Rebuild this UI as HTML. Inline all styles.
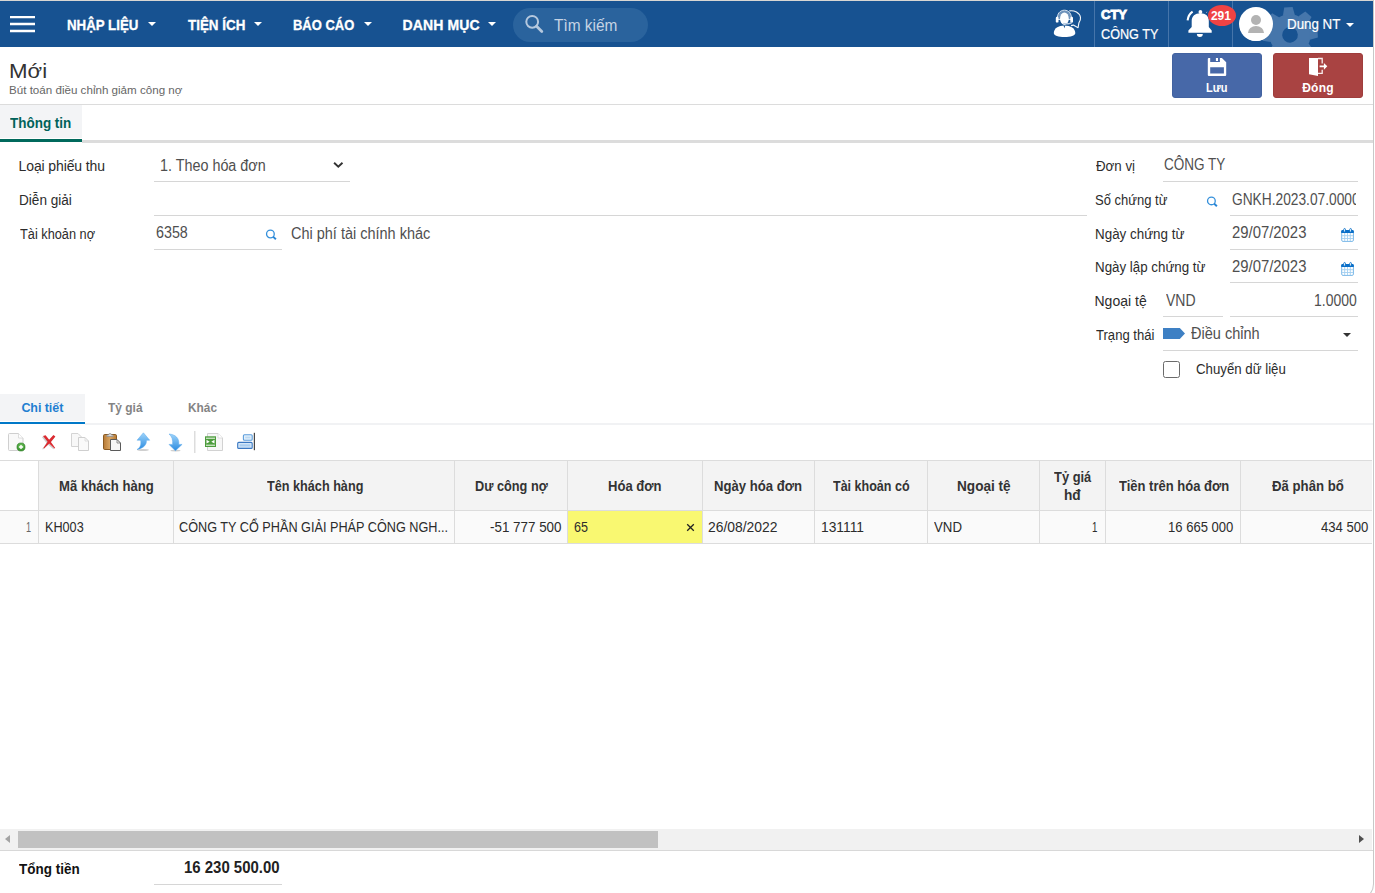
<!DOCTYPE html>
<html lang="vi">
<head>
<meta charset="utf-8">
<title>Bút toán điều chỉnh giảm công nợ</title>
<style>
*{box-sizing:border-box;margin:0;padding:0}
html,body{width:1375px;height:893px;overflow:hidden;background:#fff}
body{font-family:"Liberation Sans",sans-serif;font-size:14px;color:#333;position:relative}
.a{position:absolute}
.t{position:absolute;white-space:nowrap;line-height:20px;height:20px}
.car{position:absolute;width:0;height:0;border-left:4px solid transparent;border-right:4px solid transparent;border-top:4px solid #fff}
.sep{position:absolute;top:1px;width:1px;height:46px;background:#4675aa}
.ul{position:absolute;height:1px;background:#d6d6d6}
.vl{position:absolute;width:1px;background:#dcdcdc}
</style>
</head>
<body>
<!-- NAVBAR -->
<div class="a" style="left:0;top:1px;width:1373px;height:46px;background:#175291;overflow:hidden">
  <!-- gear watermark -->
  <svg class="a" style="left:1250px;top:0" width="80" height="46" viewBox="1250 1 80 46"><g fill="#4676ab" transform="translate(1290 34.900) rotate(-3.300)"><circle r="20.600"/><path d="M-4.200 -27.700 L4.200 -27.700 L6 -19.500 L-6 -19.500z" transform="rotate(0)"/><path d="M-4.200 -27.700 L4.200 -27.700 L6 -19.500 L-6 -19.500z" transform="rotate(45)"/><path d="M-4.200 -27.700 L4.200 -27.700 L6 -19.500 L-6 -19.500z" transform="rotate(90)"/><path d="M-4.200 -27.700 L4.200 -27.700 L6 -19.500 L-6 -19.500z" transform="rotate(135)"/><path d="M-4.200 -27.700 L4.200 -27.700 L6 -19.500 L-6 -19.500z" transform="rotate(180)"/><path d="M-4.200 -27.700 L4.200 -27.700 L6 -19.500 L-6 -19.500z" transform="rotate(225)"/><path d="M-4.200 -27.700 L4.200 -27.700 L6 -19.500 L-6 -19.500z" transform="rotate(270)"/><path d="M-4.200 -27.700 L4.200 -27.700 L6 -19.500 L-6 -19.500z" transform="rotate(315)"/><circle r="7.850" fill="#175291"/></g></svg>
</div>
<svg class="a" style="left:8px;top:12px" width="30" height="24" viewBox="8 12 30 24"><path d="M10 17.100 h25 M10 24.050 h25 M10 31 h25" stroke="#fff" stroke-width="2.400"/></svg>
<div class="car" style="left:148px;top:22px"></div>
<div class="car" style="left:254px;top:22px"></div>
<div class="car" style="left:364px;top:22px"></div>
<div class="car" style="left:488px;top:22px"></div>
<div class="a" style="left:513px;top:8px;width:135px;height:34px;border-radius:17px;background:#2a639d"></div>
<svg class="a" style="left:523px;top:13px" width="22" height="22" viewBox="0 0 22 22"><circle cx="9.2" cy="8.8" r="5.9" fill="none" stroke="#b5c8de" stroke-width="2"/><path d="M13.6 13.2 L18.8 18.4" stroke="#b5c8de" stroke-width="2.8" stroke-linecap="round"/></svg>
<div class="sep" style="left:1094px"></div>
<div class="sep" style="left:1168px"></div>
<div class="sep" style="left:1232px"></div>
<!-- support icon -->
<svg class="a" style="left:1046px;top:4px" width="48" height="40" viewBox="1046 4 48 40">
<path d="M1069.300 10.900 c5 -0.800 10.400 1.800 11.200 6.600 c0.300 2.400 -0.600 4 -1.600 5.400 l-0.800 4.800 l-4.800 -2.600 l-2.300 0.500" fill="none" stroke="#fff" stroke-width="1.100" stroke-linejoin="round" opacity="0.950"/>
<path d="M1057.400 19.500 c-0.500 -5.600 2.400 -9.300 7 -9.300 s7.500 3.700 7 9.300z" fill="#fff" fill-opacity="0.380" stroke="#d5e1ef" stroke-width="1"/>
<ellipse cx="1064.400" cy="18.700" rx="4.400" ry="6.200" fill="#fff"/>
<rect x="1055.800" y="16.800" width="2.700" height="5.800" rx="1.200" fill="#fff"/>
<rect x="1070.300" y="16.800" width="2.700" height="5.800" rx="1.200" fill="#fff"/>
<path d="M1071.500 22.400 c-0.600 1.600 -3.200 1.400 -7.600 1.200" fill="none" stroke="#b9cce2" stroke-width="1.500" stroke-linecap="round"/>
<path d="M1053.800 33 c0 -4.800 4.600 -7.600 10.700 -7.600 s10.800 2.800 10.800 7.600 c0 2.600 -4.800 4 -10.800 4 s-10.700 -1.400 -10.700 -4z" fill="#fff"/>
<path d="M1063.500 25.400 l0.900 2.800 l0.900 -2.800z" fill="#175291"/>
</svg>
<!-- bell -->
<svg class="a" style="left:1180px;top:4px" width="40" height="40" viewBox="1180 4 40 40">
<circle cx="1200.400" cy="12" r="1.900" fill="#fff"/>
<path d="M1191.700 27 V21 C1191.700 16 1195 13.200 1200.400 13.200 S1208.800 16 1208.800 21 V27 L1211.700 30.600 V32.700 H1188.400 V30.600z" fill="#fff"/>
<path d="M1196.900 34 h5.900 a2.950 2.900 0 0 1 -5.900 0z" fill="#fff"/>
<path d="M1187.600 20.300 c0.500 -3.800 2.200 -6.800 5 -8.700" fill="none" stroke="#fff" stroke-width="2.100"/>
<path d="M1206.200 12.600 l1 -0.600" fill="none" stroke="#9fb9d6" stroke-width="1"/>
</svg>
<div class="a" style="left:1208px;top:5px;width:28px;height:21px;border-radius:50%;background:#f04343"></div>
<!-- avatar -->
<div class="a" style="left:1239px;top:7px;width:34px;height:34px;border-radius:17px;background:#fff;overflow:hidden">
 <div class="a" style="left:12px;top:8px;width:10px;height:10px;border-radius:5px;background:#b3b3b3"></div>
 <div class="a" style="left:9px;top:18.500px;width:16px;height:14px;border-radius:8px 8px 0 0/7px 7px 0 0;background:#b3b3b3"></div>
 <div class="a" style="left:0;top:26px;width:34px;height:8px;background:#fff"></div>
</div>
<div class="car" style="left:1346px;top:23px"></div>

<!-- top/window edges -->
<div class="a" style="left:0;top:0;width:1374px;height:1px;background:#d8d6d3"></div>
<div class="a" style="left:1373px;top:0;width:1px;height:878px;background:#c8c8c8"></div>
<div class="a" style="left:1344px;top:850px;width:30px;height:50px;border-right:1px solid #c8c8c8;border-bottom:1px solid #c8c8c8;border-bottom-right-radius:16px"></div>

<!-- buttons -->
<div class="a" style="left:1172px;top:53px;width:90px;height:45px;border-radius:3px;background:#4768a8;border:1px solid #4262a0"></div>
<div class="a" style="left:1273px;top:53px;width:90px;height:45px;border-radius:3px;background:#a94342;border:1px solid #9f3d3c"></div>
<svg class="a" style="left:1204px;top:54px" width="28" height="26" viewBox="1204 54 28 26"><path d="M1207.800 58.900 a1 1 0 0 1 1 -1 h1.400 v4 h9.700 v-4 h2 l4.300 4.300 v12.700 a1 1 0 0 1 -1 1 h-16.400 a1 1 0 0 1 -1 -1z M1210.200 67.300 v6.200 h13.700 v-6.200z M1215.900 57.900 h2.100 v3 h-2.100z" fill="#fff" fill-rule="evenodd"/></svg>
<svg class="a" style="left:1304px;top:54px" width="28" height="26" viewBox="1304 54 28 26"><path d="M1309 57.900 h9 v18 l-9 -1.600z" fill="#fff"/><path d="M1318 58.500 h4.200 v5 M1322.200 69.700 v3.600 h-4.200" fill="none" stroke="#fff" stroke-width="1.300" opacity="0.900"/><path d="M1319.600 65.400 h4.300 v-2.400 l3.400 3.350 l-3.400 3.350 v-2.400 h-4.300z" fill="#fff"/></svg>

<!-- title line & main tab -->
<div class="a" style="left:0;top:104px;width:1373px;height:1px;background:#dcdcdc"></div>
<div class="a" style="left:0;top:105px;width:82px;height:33px;background:#f3f4f6"></div>
<div class="a" style="left:82px;top:140px;width:1291px;height:3px;background:#dcdcdc"></div>
<div class="a" style="left:0;top:139px;width:82px;height:3px;background:#00695c"></div>

<!-- form underlines -->
<div class="ul" style="left:154px;top:181px;width:196px"></div>
<div class="ul" style="left:154px;top:215px;width:933px"></div>
<div class="ul" style="left:154px;top:249px;width:128px"></div>
<div class="ul" style="left:1163px;top:181px;width:195px"></div>
<div class="ul" style="left:1230px;top:215px;width:128px"></div>
<div class="ul" style="left:1230px;top:249px;width:128px"></div>
<div class="ul" style="left:1230px;top:282px;width:128px"></div>
<div class="ul" style="left:1163px;top:316px;width:60px"></div>
<div class="ul" style="left:1230px;top:316px;width:128px"></div>
<div class="ul" style="left:1163px;top:350px;width:195px"></div>
<!-- select chevron -->
<svg class="a" style="left:333px;top:161px" width="12" height="9" viewBox="0 0 12 9"><path d="M1.100 1.800 L5.300 5.800 L9.500 1.800" fill="none" stroke="#333" stroke-width="1.900"/></svg>
<!-- search icons -->
<svg class="a" style="left:265px;top:229px" width="12" height="12" viewBox="0 0 12 12"><circle cx="5.400" cy="5" r="3.850" fill="none" stroke="#3590db" stroke-width="1.300"/><path d="M8 7.600 L10.900 10.300" stroke="#2a86d6" stroke-width="1.900"/></svg>
<svg class="a" style="left:1206px;top:196px" width="12" height="12" viewBox="0 0 12 12"><circle cx="5.400" cy="4.900" r="3.850" fill="none" stroke="#3590db" stroke-width="1.300"/><path d="M8 7.500 L10.900 10.200" stroke="#2a86d6" stroke-width="1.900"/></svg>
<!-- calendar icons -->
<svg class="a" style="left:1339px;top:226px" width="18" height="18" viewBox="1339 226 18 18"><rect x="1341.700" y="230.600" width="11.700" height="10.800" rx="1.300" fill="#fff" stroke="#7ab8e8" stroke-width="1"/><path d="M1342 235.700 h11 M1342 238.500 h11 M1344.700 233 v8 M1347.500 233 v8 M1350.300 233 v8" stroke="#a3cff0" stroke-width="0.900"/><path d="M1341.200 233 v-1.700 a1.300 1.300 0 0 1 1.300 -1.300 h10 a1.300 1.300 0 0 1 1.300 1.300 v1.700z" fill="#0a6fc8"/><path d="M1343.700 232 v-2.300 a0.900 1.200 0 0 1 1.800 0 v2.300z M1349.700 232 v-2.300 a0.900 1.200 0 0 1 1.800 0 v2.300z" fill="#fff" stroke="#0a6fc8" stroke-width="0.900"/></svg>
<svg class="a" style="left:1339px;top:260px" width="18" height="18" viewBox="1339 226 18 18"><rect x="1341.700" y="230.600" width="11.700" height="10.800" rx="1.300" fill="#fff" stroke="#7ab8e8" stroke-width="1"/><path d="M1342 235.700 h11 M1342 238.500 h11 M1344.700 233 v8 M1347.500 233 v8 M1350.300 233 v8" stroke="#a3cff0" stroke-width="0.900"/><path d="M1341.200 233 v-1.700 a1.300 1.300 0 0 1 1.300 -1.300 h10 a1.300 1.300 0 0 1 1.300 1.300 v1.700z" fill="#0a6fc8"/><path d="M1343.700 232 v-2.300 a0.900 1.200 0 0 1 1.800 0 v2.300z M1349.700 232 v-2.300 a0.900 1.200 0 0 1 1.800 0 v2.300z" fill="#fff" stroke="#0a6fc8" stroke-width="0.900"/></svg>
<!-- status tag -->
<svg class="a" style="left:1163px;top:327px" width="23" height="13" viewBox="1163 327 23 13"><path d="M1163 328 h16.800 l5.200 5.400 l-5.200 5.500 h-16.800z" fill="#3e80c4"/></svg>
<div class="a" style="left:1343px;top:333px;width:0;height:0;border-left:4px solid transparent;border-right:4px solid transparent;border-top:4px solid #333"></div>
<!-- checkbox -->
<div class="a" style="left:1163px;top:361px;width:17px;height:17px;border:1px solid #6b6b6b;border-radius:2.500px;background:#fff"></div>

<!-- detail tabs -->
<div class="a" style="left:0;top:394px;width:85px;height:27px;background:#f3f4f6"></div>
<div class="a" style="left:85px;top:423px;width:1288px;height:2px;background:#f1f2f4"></div>
<div class="a" style="left:0;top:422px;width:85px;height:2px;background:#0078c8"></div>

<!--TB0--><!-- toolbar icons -->
<svg class="a" style="left:0;top:428px" width="262" height="28" viewBox="0 428 262 28">
<defs>
<linearGradient id="gb" x1="0" y1="0" x2="0" y2="1"><stop offset="0" stop-color="#9fd4fa"/><stop offset="1" stop-color="#2a8be0"/></linearGradient>
<linearGradient id="gb2" x1="0" y1="0" x2="1" y2="0"><stop offset="0" stop-color="#2f8fe3"/><stop offset="0.5" stop-color="#9ad1f9"/><stop offset="1" stop-color="#2f8fe3"/></linearGradient>
<linearGradient id="gbr" x1="0" y1="0" x2="1" y2="0"><stop offset="0" stop-color="#b77a35"/><stop offset="0.5" stop-color="#d9a665"/><stop offset="1" stop-color="#b77a35"/></linearGradient>
<radialGradient id="gg" cx="0.5" cy="0.4" r="0.6"><stop offset="0" stop-color="#7fd06a"/><stop offset="1" stop-color="#2f8a25"/></radialGradient>
</defs>
<!-- new -->
<path d="M8.500 434.500 a1 1 0 0 1 1 -1 h9 l4.500 4.500 v11.500 a1 1 0 0 1 -1 1 h-12.500 a1 1 0 0 1 -1 -1z" fill="#f9f9f9" stroke="#cfcfcf" stroke-width="1"/>
<path d="M18.500 433.500 v4.500 h4.500" fill="#fff" stroke="#d6d6d6" stroke-width="0.800"/>
<circle cx="21" cy="447" r="4.100" fill="url(#gg)" stroke="#2c7d22" stroke-width="0.500"/>
<path d="M21 444.900 v4.200 M18.900 447 h4.200" stroke="#fff" stroke-width="1.400"/>
<!-- delete -->
<path d="M42.600 436.600 l2.600 -0.600 l3.800 4.600 l4.400 -5 l2 1.600 l-4.700 5.600 l4.300 5.600 l-0.800 0.600 l-5.200 -4.600 l-5.200 4.800 l-0.800 -0.600 l4.400 -6z" fill="#b9b9b9" opacity="0.700" transform="translate(-0.800 0.300)"/>
<path d="M43 436 l2.600 -0.800 l3.600 4.600 l4.200 -4.800 l2 1.400 l-4.500 5.600 l4.300 5.900 l-0.700 0.500 l-5.300 -4.800 l-5.100 4.900 l-0.700 -0.500 l4.200 -6.200z" fill="#dc2a30"/>
<!-- copy -->
<path d="M71.500 433.500 h6.500 l3.500 3.500 v9.500 h-10z" fill="#f8f8f8" stroke="#d4d4d4"/>
<path d="M78.500 437.500 h6.500 l3.500 3.500 v9.500 h-10z" fill="#fafafa" stroke="#cfcfcf"/>
<path d="M85 437.500 v3.500 h3.500" fill="none" stroke="#d8d8d8" stroke-width="0.800"/>
<!-- paste -->
<rect x="103.500" y="434.500" width="13" height="15" rx="1.200" fill="url(#gbr)" stroke="#8a5a22"/>
<path d="M106.800 436.500 v-1.500 h1.700 a1.500 1.500 0 0 1 3 0 h1.700 v1.500z" fill="#d9d9d9" stroke="#8d8d8d" stroke-width="0.700"/>
<path d="M110.500 439.500 h6.500 l3.500 3.500 v7.500 h-10z" fill="#f6f6f6" stroke="#5a5a5a"/>
<path d="M117 439.500 v3.500 h3.500" fill="none" stroke="#777" stroke-width="0.800"/>
<!-- up -->
<ellipse cx="143" cy="450" rx="6" ry="0.900" fill="#cfcfcf"/>
<path d="M143.400 432.800 l6.300 7.400 h-3.300 c0.300 4 -1.800 7.600 -9.400 9.400 c3.600 -2.400 4.400 -5.400 3.600 -9.400 h-3.500z" fill="url(#gb)" stroke="#58a9ec" stroke-width="0.500"/>
<!-- down -->
<ellipse cx="175.500" cy="450.600" rx="5" ry="0.900" fill="#cfcfcf"/>
<path d="M169 434 c6.400 0.600 10.400 4 9.800 10.400 h3.300 l-6.700 6.400 l-6.400 -6.400 h3.600 c0.400 -4.600 -0.600 -8 -3.600 -10.400z" fill="url(#gb)" stroke="#58a9ec" stroke-width="0.500"/>
<!-- separator -->
<rect x="194" y="431" width="1.500" height="22" fill="#dddddd"/>
<!-- excel -->
<path d="M207.500 433.500 h10.500 l4.500 4.500 v12.500 h-15z" fill="#f7f7f7" stroke="#d2d2d2"/>
<path d="M218 433.500 v4.500 h4.500" fill="#fff" stroke="#d8d8d8" stroke-width="0.800"/>
<rect x="205" y="436.300" width="11" height="10.700" fill="#4c9c3c"/>
<rect x="206" y="437.600" width="9" height="1.300" fill="#cfe8c8"/>
<rect x="206" y="444.600" width="9" height="1.300" fill="#cfe8c8"/>
<path d="M206.500 439.800 l3.200 1.900 l-3.200 1.900z M214.500 439.800 l-3.200 1.900 l3.200 1.900z" fill="#fff"/>
<!-- layout -->
<rect x="243.400" y="434.800" width="8.800" height="5.400" rx="1" fill="#e3f0fb" stroke="#5c9ddb" stroke-width="1.100"/>
<rect x="245.200" y="436.600" width="5.200" height="1.800" fill="#bcd9f3"/>
<rect x="237.700" y="442.400" width="14.500" height="6" rx="1" fill="#d5e7f8" stroke="#3a78c2" stroke-width="1.100"/>
<rect x="239.600" y="444.300" width="10.700" height="2.200" fill="#a9cdf0"/>
<rect x="253.800" y="432.800" width="1.100" height="17.400" fill="#333"/>
</svg>
<!--TB1-->

<!-- grid -->
<div class="a" style="left:0;top:460px;width:1372px;height:1px;background:#dcdcdc"></div>
<div class="a" style="left:38px;top:461px;width:1334px;height:49px;background:#f3f3f3"></div>
<div class="a" style="left:0;top:510px;width:1372px;height:1px;background:#dcdcdc"></div>
<div class="a" style="left:0;top:511px;width:1372px;height:32px;background:#fafafa"></div>
<div class="a" style="left:568px;top:511px;width:134px;height:32px;background:#f9f871"></div>
<div class="a" style="left:0;top:543px;width:1372px;height:1px;background:#dcdcdc"></div>
<div class="vl" style="left:38px;top:461px;height:82px"></div>
<div class="vl" style="left:173px;top:461px;height:82px"></div>
<div class="vl" style="left:454px;top:461px;height:82px"></div>
<div class="vl" style="left:567px;top:461px;height:82px"></div>
<div class="vl" style="left:702px;top:461px;height:82px"></div>
<div class="vl" style="left:814px;top:461px;height:82px"></div>
<div class="vl" style="left:927px;top:461px;height:82px"></div>
<div class="vl" style="left:1039px;top:461px;height:82px"></div>
<div class="vl" style="left:1105px;top:461px;height:82px"></div>
<div class="vl" style="left:1240px;top:461px;height:82px"></div>
<svg class="a" style="left:686px;top:523px" width="9" height="9" viewBox="0 0 9 9"><path d="M1.200 1.200 L7.800 7.800 M7.800 1.200 L1.200 7.800" stroke="#222" stroke-width="1.300"/></svg>

<!-- scrollbar -->
<div class="a" style="left:0;top:829px;width:1372px;height:21px;background:#f1f1f1"></div>
<div class="a" style="left:18px;top:831px;width:640px;height:17px;background:#c1c1c1"></div>
<div class="a" style="left:5px;top:835px;width:0;height:0;border-top:4.500px solid transparent;border-bottom:4.500px solid transparent;border-right:5px solid #a3a3a3"></div>
<div class="a" style="left:1358.500px;top:834.500px;width:0;height:0;border-top:4.800px solid transparent;border-bottom:4.800px solid transparent;border-left:5.500px solid #505050"></div>
<div class="a" style="left:0;top:850px;width:1373px;height:1px;background:#d8d8d8"></div>
<div class="ul" style="left:154px;top:884px;width:128px"></div>

<div class="t" style="left:67.4px;top:15px;font-size:14px;color:#fff;font-weight:bold;transform:scaleX(0.949);transform-origin:0 0;-webkit-text-stroke:0.3px #fff">NHẬP LIỆU</div>
<div class="t" style="left:187.5px;top:15px;font-size:14px;color:#fff;font-weight:bold;transform:scaleX(0.958);transform-origin:0 0;-webkit-text-stroke:0.3px #fff">TIỆN ÍCH</div>
<div class="t" style="left:293.1px;top:15px;font-size:14px;color:#fff;font-weight:bold;transform:scaleX(0.926);transform-origin:0 0;-webkit-text-stroke:0.3px #fff">BÁO CÁO</div>
<div class="t" style="left:402.6px;top:15px;font-size:14px;color:#fff;font-weight:bold;letter-spacing:0.10px;-webkit-text-stroke:0.3px #fff">DANH MỤC</div>
<div class="t" style="left:554.3px;top:16px;font-size:16px;color:#c5d3e4;transform:scaleX(0.965);transform-origin:0 0;">Tìm kiếm</div>
<div class="t" style="left:1101.0px;top:5px;font-size:13px;color:#fff;font-weight:bold;-webkit-text-stroke:0.9px #fff">CTY</div>
<div class="t" style="left:1100.5px;top:24px;font-size:14px;color:#fff;transform:scaleX(0.903);transform-origin:0 0;-webkit-text-stroke:0.2px #fff">CÔNG TY</div>
<div class="t" style="left:1211.0px;top:6px;font-size:12px;color:#fff;font-weight:bold;letter-spacing:-0.10px;">291</div>
<div class="t" style="left:1287.1px;top:14px;font-size:15px;color:#fff;transform:scaleX(0.890);transform-origin:0 0;-webkit-text-stroke:0.2px #fff">Dung NT</div>
<div class="t" style="left:8.7px;top:61px;font-size:21px;color:#333;transform:scaleX(1.061);transform-origin:0 0;">Mới</div>
<div class="t" style="left:9.3px;top:80px;font-size:11px;color:#666;transform:scaleX(1.055);transform-origin:0 0;">Bút toán điều chỉnh giảm công nợ</div>
<div class="t" style="left:1205.9px;top:78px;font-size:12px;color:#fff;font-weight:bold;transform:scaleX(0.914);transform-origin:0 0;">Lưu</div>
<div class="t" style="left:1302.2px;top:78px;font-size:12px;color:#fff;font-weight:bold;letter-spacing:0.27px;">Đóng</div>
<div class="t" style="left:9.5px;top:113px;font-size:15px;color:#00625a;font-weight:bold;transform:scaleX(0.897);transform-origin:0 0;">Thông tin</div>
<div class="t" style="left:18.6px;top:156px;font-size:14px;color:#2c2c2c;letter-spacing:-0.12px;">Loại phiếu thu</div>
<div class="t" style="left:18.6px;top:190px;font-size:14px;color:#2c2c2c;transform:scaleX(0.970);transform-origin:0 0;">Diễn giải</div>
<div class="t" style="left:19.6px;top:224px;font-size:14px;color:#2c2c2c;transform:scaleX(0.911);transform-origin:0 0;">Tài khoản nợ</div>
<div class="t" style="left:159.6px;top:156px;font-size:16px;color:#4f4f4f;transform:scaleX(0.897);transform-origin:0 0;">1. Theo hóa đơn</div>
<div class="t" style="left:155.7px;top:223px;font-size:16px;color:#4f4f4f;transform:scaleX(0.894);transform-origin:0 0;">6358</div>
<div class="t" style="left:290.5px;top:224px;font-size:16px;color:#4f4f4f;transform:scaleX(0.905);transform-origin:0 0;">Chi phí tài chính khác</div>
<div class="t" style="left:1095.5px;top:156px;font-size:14px;color:#2c2c2c;transform:scaleX(0.950);transform-origin:0 0;">Đơn vị</div>
<div class="t" style="left:1164.2px;top:155px;font-size:16px;color:#4f4f4f;transform:scaleX(0.845);transform-origin:0 0;">CÔNG TY</div>
<div class="t" style="left:1094.6px;top:190px;font-size:14px;color:#2c2c2c;transform:scaleX(0.929);transform-origin:0 0;">Số chứng từ</div>
<div class="a" style="left:1228px;top:186px;width:127.5px;height:28px;overflow:hidden"><div class="t" style="left:4.0px;top:4px;font-size:16px;color:#4f4f4f;transform:scaleX(0.859);transform-origin:0 0;">GNKH.2023.07.00001</div></div>
<div class="t" style="left:1094.5px;top:224px;font-size:14px;color:#2c2c2c;transform:scaleX(0.957);transform-origin:0 0;">Ngày chứng từ</div>
<div class="t" style="left:1231.7px;top:223px;font-size:16px;color:#4f4f4f;transform:scaleX(0.929);transform-origin:0 0;">29/07/2023</div>
<div class="t" style="left:1094.5px;top:257px;font-size:14px;color:#2c2c2c;transform:scaleX(0.952);transform-origin:0 0;">Ngày lập chứng từ</div>
<div class="t" style="left:1231.7px;top:257px;font-size:16px;color:#4f4f4f;transform:scaleX(0.929);transform-origin:0 0;">29/07/2023</div>
<div class="t" style="left:1094.5px;top:291px;font-size:14px;color:#2c2c2c;letter-spacing:0.01px;">Ngoại tệ</div>
<div class="t" style="left:1165.8px;top:291px;font-size:16px;color:#4f4f4f;transform:scaleX(0.876);transform-origin:0 0;">VND</div>
<div class="t" style="left:1314.1px;top:291px;font-size:16px;color:#4f4f4f;transform:scaleX(0.872);transform-origin:0 0;">1.0000</div>
<div class="t" style="left:1095.5px;top:325px;font-size:14px;color:#2c2c2c;transform:scaleX(0.935);transform-origin:0 0;">Trạng thái</div>
<div class="t" style="left:1191.0px;top:324px;font-size:16px;color:#4f4f4f;transform:scaleX(0.907);transform-origin:0 0;">Điều chỉnh</div>
<div class="t" style="left:1196.1px;top:359px;font-size:14px;color:#2c2c2c;transform:scaleX(0.946);transform-origin:0 0;">Chuyển dữ liệu</div>
<div class="t" style="left:21.4px;top:398px;font-size:12.5px;color:#1f7fd1;font-weight:bold;letter-spacing:-0.06px;">Chi tiết</div>
<div class="t" style="left:108.4px;top:398px;font-size:12.5px;color:#848484;font-weight:bold;transform:scaleX(0.956);transform-origin:0 0;">Tỷ giá</div>
<div class="t" style="left:187.6px;top:398px;font-size:12.5px;color:#848484;font-weight:bold;transform:scaleX(0.948);transform-origin:0 0;">Khác</div>
<div class="t" style="left:58.5px;top:476px;font-size:15px;color:#333;font-weight:bold;transform:scaleX(0.875);transform-origin:0 0;">Mã khách hàng</div>
<div class="t" style="left:266.6px;top:476px;font-size:15px;color:#333;font-weight:bold;transform:scaleX(0.844);transform-origin:0 0;">Tên khách hàng</div>
<div class="t" style="left:474.7px;top:476px;font-size:15px;color:#333;font-weight:bold;transform:scaleX(0.849);transform-origin:0 0;">Dư công nợ</div>
<div class="t" style="left:607.9px;top:476px;font-size:15px;color:#333;font-weight:bold;transform:scaleX(0.870);transform-origin:0 0;">Hóa đơn</div>
<div class="t" style="left:714.4px;top:476px;font-size:15px;color:#333;font-weight:bold;transform:scaleX(0.874);transform-origin:0 0;">Ngày hóa đơn</div>
<div class="t" style="left:833.0px;top:476px;font-size:15px;color:#333;font-weight:bold;transform:scaleX(0.835);transform-origin:0 0;">Tài khoản có</div>
<div class="t" style="left:956.5px;top:476px;font-size:15px;color:#333;font-weight:bold;transform:scaleX(0.907);transform-origin:0 0;">Ngoại tệ</div>
<div class="t" style="left:1054.0px;top:467px;font-size:15px;color:#333;font-weight:bold;transform:scaleX(0.860);transform-origin:0 0;">Tỷ giá</div>
<div class="t" style="left:1063.7px;top:485px;font-size:15px;color:#333;font-weight:bold;transform:scaleX(0.911);transform-origin:0 0;">hđ</div>
<div class="t" style="left:1118.5px;top:476px;font-size:15px;color:#333;font-weight:bold;transform:scaleX(0.867);transform-origin:0 0;">Tiền trên hóa đơn</div>
<div class="t" style="left:1272.4px;top:476px;font-size:15px;color:#333;font-weight:bold;transform:scaleX(0.879);transform-origin:0 0;">Đã phân bổ</div>
<div class="t" style="left:26.0px;top:517px;font-size:14.5px;color:#666;transform:scaleX(0.629);transform-origin:0 0;">1</div>
<div class="t" style="left:44.6px;top:517px;font-size:14.5px;color:#2c2c2c;transform:scaleX(0.872);transform-origin:0 0;">KH003</div>
<div class="t" style="left:179.1px;top:517px;font-size:14.5px;color:#2c2c2c;transform:scaleX(0.874);transform-origin:0 0;">CÔNG TY CỔ PHẦN GIẢI PHÁP CÔNG NGH...</div>
<div class="t" style="left:489.9px;top:517px;font-size:14.5px;color:#2c2c2c;transform:scaleX(0.924);transform-origin:0 0;">-51 777 500</div>
<div class="t" style="left:574.1px;top:517px;font-size:14.5px;color:#2c2c2c;transform:scaleX(0.867);transform-origin:0 0;">65</div>
<div class="t" style="left:708.0px;top:517px;font-size:14.5px;color:#2c2c2c;transform:scaleX(0.958);transform-origin:0 0;">26/08/2022</div>
<div class="t" style="left:820.7px;top:517px;font-size:14.5px;color:#2c2c2c;transform:scaleX(0.952);transform-origin:0 0;">131111</div>
<div class="t" style="left:934.0px;top:517px;font-size:14.5px;color:#2c2c2c;transform:scaleX(0.913);transform-origin:0 0;">VND</div>
<div class="t" style="left:1092.3px;top:517px;font-size:14.5px;color:#2c2c2c;transform:scaleX(0.671);transform-origin:0 0;">1</div>
<div class="t" style="left:1167.9px;top:517px;font-size:14.5px;color:#2c2c2c;transform:scaleX(0.900);transform-origin:0 0;">16 665 000</div>
<div class="t" style="left:1321.4px;top:517px;font-size:14.5px;color:#2c2c2c;transform:scaleX(0.904);transform-origin:0 0;">434 500</div>
<div class="t" style="left:18.8px;top:859px;font-size:14.5px;color:#111;font-weight:bold;transform:scaleX(0.929);transform-origin:0 0;">Tổng tiền</div>
<div class="t" style="left:184.1px;top:858px;font-size:16px;color:#222;font-weight:bold;transform:scaleX(0.934);transform-origin:0 0;">16 230 500.00</div>
</body>
</html>
